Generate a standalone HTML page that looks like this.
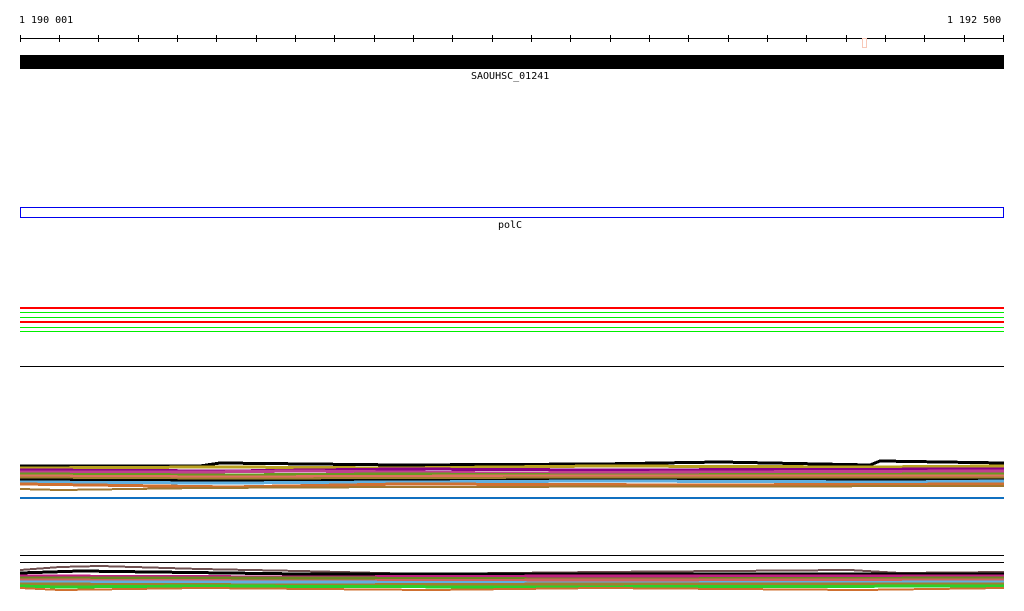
<!DOCTYPE html>
<html><head><meta charset="utf-8"><style>
html,body{margin:0;padding:0;background:#fff;width:1024px;height:611px;overflow:hidden}
svg text{font-family:"DejaVu Sans Mono","Liberation Mono",monospace;font-size:10px;fill:#000}
</style></head><body>
<svg width="1024" height="611" viewBox="0 0 1024 611" xmlns="http://www.w3.org/2000/svg" shape-rendering="crispEdges">
<text x="19" y="23">1 190 001</text>
<text x="947" y="23">1 192 500</text>
<line x1="20" y1="38.5" x2="1004" y2="38.5" stroke="#000"/>
<g stroke="#000">
<line x1="20.5" y1="35" x2="20.5" y2="42"/><line x1="59.5" y1="35" x2="59.5" y2="42"/><line x1="98.5" y1="35" x2="98.5" y2="42"/><line x1="138.5" y1="35" x2="138.5" y2="42"/><line x1="177.5" y1="35" x2="177.5" y2="42"/><line x1="216.5" y1="35" x2="216.5" y2="42"/><line x1="256.5" y1="35" x2="256.5" y2="42"/><line x1="295.5" y1="35" x2="295.5" y2="42"/><line x1="334.5" y1="35" x2="334.5" y2="42"/><line x1="374.5" y1="35" x2="374.5" y2="42"/><line x1="413.5" y1="35" x2="413.5" y2="42"/><line x1="452.5" y1="35" x2="452.5" y2="42"/><line x1="492.5" y1="35" x2="492.5" y2="42"/><line x1="531.5" y1="35" x2="531.5" y2="42"/><line x1="570.5" y1="35" x2="570.5" y2="42"/><line x1="610.5" y1="35" x2="610.5" y2="42"/><line x1="649.5" y1="35" x2="649.5" y2="42"/><line x1="688.5" y1="35" x2="688.5" y2="42"/><line x1="728.5" y1="35" x2="728.5" y2="42"/><line x1="767.5" y1="35" x2="767.5" y2="42"/><line x1="806.5" y1="35" x2="806.5" y2="42"/><line x1="846.5" y1="35" x2="846.5" y2="42"/><line x1="885.5" y1="35" x2="885.5" y2="42"/><line x1="924.5" y1="35" x2="924.5" y2="42"/><line x1="964.5" y1="35" x2="964.5" y2="42"/><line x1="1003.5" y1="35" x2="1003.5" y2="42"/>
</g>
<rect x="862.5" y="38.5" width="4" height="9" fill="none" stroke="#f8c8b8"/>
<rect x="20" y="55" width="984" height="14" fill="#000"/>
<text x="471" y="79">SAOUHSC_01241</text>
<rect x="20.5" y="207.5" width="983" height="10" fill="none" stroke="#0000ee"/>
<text x="498" y="228">polC</text>
<g stroke-width="2">
<line x1="20" y1="308" x2="1004" y2="308" stroke="#f00"/>
<line x1="20" y1="312.5" x2="1004" y2="312.5" stroke="#0e0" stroke-width="1"/>
<line x1="20" y1="317.5" x2="1004" y2="317.5" stroke="#0e0" stroke-width="1"/>
<line x1="20" y1="322" x2="1004" y2="322" stroke="#f00"/>
<line x1="20" y1="327.5" x2="1004" y2="327.5" stroke="#0e0" stroke-width="1"/>
<line x1="20" y1="331.5" x2="1004" y2="331.5" stroke="#0e0" stroke-width="1"/>
<line x1="20" y1="366.5" x2="1004" y2="366.5" stroke="#000" stroke-width="1"/>
</g>
<g fill="none" stroke-width="3">
<polyline points="20,466 200,466 220,463 400,465 600,464 720,462 870,465 880,461 1004,463" stroke="#000"/>
<polyline points="20,468 220,467 400,468 600,466 870,467 1004,466" stroke="#b8a020"/>
<polyline points="20,470 230,471 400,469 600,470 1004,469" stroke="#880088"/>
<polyline points="20,472 200,472 300,471 500,473 700,472 1004,471" stroke="#c04090"/>
<polyline points="20,474 220,475 400,474 600,475 1004,474" stroke="#6a9a20"/>
<polyline points="20,476 230,477 500,476 1004,476" stroke="#e07060"/>
<polyline points="20,478 220,479 600,478 1004,478" stroke="#a08030" />
<polyline points="20,480 230,481 600,480 1004,480" stroke="#000"/>
<polyline points="20,482 220,483 400,482 600,481 900,482 1004,481" stroke="#60b0e0"/>
<polyline points="20,484 230,487 400,484 700,485 1004,484" stroke="#d07030"/>
<polyline points="20,489 60,490 200,488 400,487 1004,486" stroke="#a07830" stroke-width="2"/>
<line x1="20" y1="498" x2="1004" y2="498" stroke="#1070c0" stroke-width="2"/>
</g>
<g stroke="#000" stroke-width="1">
<line x1="20" y1="555.5" x2="1004" y2="555.5"/>
<line x1="20" y1="562.5" x2="1004" y2="562.5"/>
</g>
<g fill="none" stroke-width="3">
<polyline points="20,570 60,567 100,566 200,569 300,571 420,574 600,572 850,570 900,573 1004,572" stroke="#705050" stroke-width="2"/>
<polyline points="20,573 80,571 300,574 600,574 1004,574" stroke="#000"/>
<polyline points="20,576 300,577 600,576 1004,576" stroke="#c02080"/>
<polyline points="20,578 300,578 600,579 1004,578" stroke="#6a8a20"/>
<polyline points="20,580 300,581 600,580 1004,580" stroke="#d06060"/>
<polyline points="20,582 300,582 600,583 1004,582" stroke="#60b0e0"/>
<polyline points="20,584 300,585 600,584 1004,584" stroke="#a08030"/>
<polyline points="20,586 60,587 200,586 500,587 1004,586" stroke="#2ad02a"/>
<polyline points="20,588 60,590 200,588 430,590 600,588 860,590 1004,588" stroke="#d07030" stroke-width="2"/>
</g>
</svg>
</body></html>
